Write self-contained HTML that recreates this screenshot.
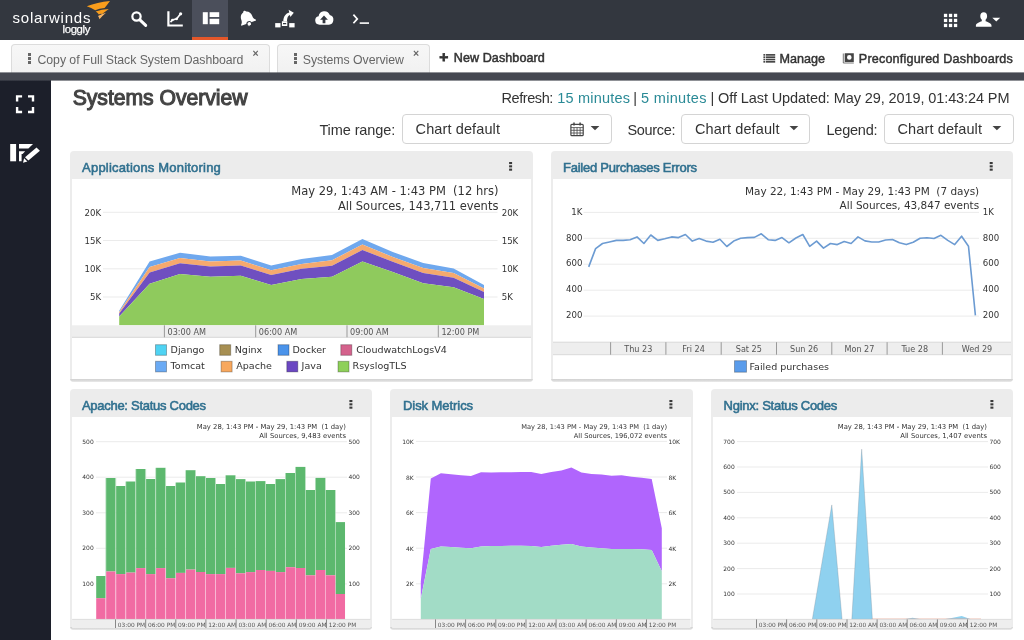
<!DOCTYPE html>
<html lang="en"><head><meta charset="utf-8"><title>Systems Overview - Loggly</title>
<style>
*{box-sizing:border-box}
html,body{margin:0;padding:0}
body{width:1024px;height:640px;overflow:hidden;background:#fff;font-family:"Liberation Sans",sans-serif;color:#333;position:relative}
.t{position:absolute;white-space:pre;display:block}
.abs{position:absolute}
header.top{position:absolute;left:0;top:0;width:1024px;height:40px;background:#33373f}
.navact{position:absolute;left:192px;top:0;width:36px;height:40px;background:#4b4f5b;border-bottom:3.5px solid #e4572a}
nav.tabs{position:absolute;left:0;top:40px;width:1024px;height:33px;background:#fff}
.tab{position:absolute;top:4px;height:29px;background:linear-gradient(#f7f7f7,#f1f1f1);border:1px solid #dcdcdc;border-bottom:none;border-radius:4px 4px 0 0}
.strip{position:absolute;z-index:2;left:0;top:72px;width:1024px;height:9px;background:linear-gradient(rgba(69,72,81,.6) 0,rgba(69,72,81,.6) 1px,#454851 1px,#454851 8px,rgba(69,72,81,.6) 8px)}
aside.side{position:absolute;left:0;top:80px;width:51px;height:560px;background:#1c1f2a}
.sel{position:absolute;height:30px;top:114px;border:1px solid #d4d4d4;border-radius:4px;background:#fff}
.panel{position:absolute;background:#ececec;border-radius:4px;overflow:hidden}
.panel .bd{position:absolute;left:2px;right:2px;bottom:3px;background:#fff}
.panel .bt{position:absolute;left:0;right:0;bottom:0;height:3px;background:linear-gradient(#d2d2d2,#dcdcdc 60%,#ececec)}
.panel svg{position:absolute;left:0;top:0}
svg text{font-family:"DejaVu Sans",sans-serif;white-space:pre}
</style></head>
<body><div id="app" style="position:absolute;left:0;top:0;width:1024px;height:640px;will-change:transform">
<header class="top">
<div class="navact"></div>
<span class="t" style="left:12.6px;top:9.5px;font-size:15px;line-height:15px;letter-spacing:0.769px;color:#fff;">solarwinds</span>
<span class="t" style="left:62.6px;top:24.05px;font-size:11.4px;line-height:11.4px;letter-spacing:-0.393px;color:#fff;-webkit-text-stroke:0.25px #fff;">loggly</span>
<svg class="abs" style="left:0;top:0" width="1024" height="40" viewBox="0 0 1024 40">
<g fill="#f99d1c">
<path d="M86.8 6.3Q97 2.2 110 .9Q107.3 4.6 104.6 7.9Q99.4 8.4 95.2 10.3Q91.3 7.6 86.8 6.3Z"/>
<path d="M95.7 11.6Q101.5 9.4 108.8 9Q105 11.8 102.2 14Q100.3 13.6 98.9 14.4Q97.5 12.8 95.7 11.6Z"/>
<path fill="#f9b566" d="M98 15.9Q101.3 13.9 106 12.7Q102.2 15.8 99.5 19.3Q99 17.4 98 15.9Z"/>
</g>
<!-- search -->
<g fill="none" stroke="#fff" stroke-linecap="round"><circle cx="136.5" cy="16.5" r="4.15" stroke-width="2.2"/><path d="M139.9 19.9l5.8 5.5" stroke-width="3"/></g>
<!-- chart -->
<g fill="none" stroke="#fff"><path d="M168.4 11.3v14.2h14.4" stroke-width="2.2"/><path d="M170.5 22.1l1.9-2.1 4.3-1.2 3.9-5" stroke-width="1.6"/></g>
<g fill="#fff"><circle cx="172.4" cy="20" r="1.3"/><circle cx="176.7" cy="18.8" r="1.35"/><circle cx="180.6" cy="13.8" r="1.6"/></g>
<!-- dashboard -->
<g fill="#fff"><rect x="202.8" y="12.2" width="5" height="12"/><rect x="209.6" y="12.2" width="9.6" height="4.8"/><rect x="209.6" y="18.8" width="9.6" height="5.4"/></g>
<!-- bell -->
<g transform="rotate(-20 247 18.5)"><path fill="#fff" d="M247 10.3c.8 0 1.4.5 1.5 1.3 2.8.8 4.3 3.1 4.3 6.1 0 2.2.6 3.6 2 4.8v1h-15.6v-1c1.4-1.2 2-2.6 2-4.8 0-3 1.5-5.3 4.3-6.1.1-.8.7-1.3 1.5-1.3z"/><circle cx="247.3" cy="24.3" r="2.3" fill="#fff" stroke="#33373f" stroke-width="1.1"/></g>
<!-- share -->
<g fill="#fff"><rect x="275.2" y="23.1" width="5.3" height="4.3"/><rect x="289.2" y="23.1" width="5.4" height="4.3"/><path d="M281.9 21.3h5.4v4.6h-5.4zM283 22.9v1.4h3.2v-1.4z" fill-rule="evenodd"/><path d="M283.3 21.2C283.5 16.5 285.7 13.4 289.3 12.5L288.6 9.7 293.8 12.7 290.4 16.9 289.9 14.9C288 15.6 287 17.6 287 21.2Z"/></g>
<!-- cloud -->
<path fill="#fff" fill-rule="evenodd" d="M319.5 24.7a4.3 4.3 0 0 1-.9-8.5 5.8 5.8 0 0 1 11.2-1.1 4.9 4.9 0 0 1-.9 9.6zM324 15.4l-3.9 4.3h2.5v3.6h2.8v-3.6h2.5z"/>
<!-- terminal -->
<g fill="none" stroke="#fff"><path d="M353.4 14.6l3.9 4.3-3.9 4.3" stroke-width="1.7"/><path d="M359.7 23.1h9.3" stroke-width="1.6"/></g>
<!-- grid -->
<g fill="#fff">
<rect x="943.9" y="13.8" width="3.3" height="3.3"/>
<rect x="948.9" y="13.8" width="3.3" height="3.3"/>
<rect x="953.9" y="13.8" width="3.3" height="3.3"/>
<rect x="943.9" y="18.8" width="3.3" height="3.3"/>
<rect x="948.9" y="18.8" width="3.3" height="3.3"/>
<rect x="953.9" y="18.8" width="3.3" height="3.3"/>
<rect x="943.9" y="23.8" width="3.3" height="3.3"/>
<rect x="948.9" y="23.8" width="3.3" height="3.3"/>
<rect x="953.9" y="23.8" width="3.3" height="3.3"/>
</g>
<!-- user -->
<path fill="#fff" d="M983.7 12.3c2.2 0 3.4 1.5 3.4 3.7 0 1.7-.6 3-1.5 3.8v1.5c2.5.9 5.9 2 5.9 4.3v1.2h-15.6v-1.2c0-2.3 3.4-3.4 5.9-4.3v-1.5c-.9-.8-1.5-2.1-1.5-3.8 0-2.2 1.2-3.7 3.4-3.7z"/>
<path fill="#fff" d="M992.3 17.8h7.9l-3.95 3.7z"/>
</svg>
</header>
<nav class="tabs">
<div class="tab" style="left:11px;width:259px"></div>
<div class="tab" style="left:277px;width:152.5px"></div>
<i class="abs" style="left:27.6px;top:13px;width:3px;height:3px;background:#666"></i><i class="abs" style="left:27.6px;top:17.2px;width:3px;height:3px;background:#666"></i><i class="abs" style="left:27.6px;top:21.4px;width:3px;height:3px;background:#666"></i>
<span class="t" style="left:37.5px;top:13.79px;font-size:12.3px;line-height:12.3px;letter-spacing:-0.055px;color:#666;">Copy of Full Stack System Dashboard</span>
<span class="t" style="left:252.6px;top:8.31px;font-size:10.5px;line-height:10.5px;font-weight:700;letter-spacing:-0.141px;color:#666;">×</span>
<i class="abs" style="left:293.6px;top:13px;width:3px;height:3px;background:#666"></i><i class="abs" style="left:293.6px;top:17.2px;width:3px;height:3px;background:#666"></i><i class="abs" style="left:293.6px;top:21.4px;width:3px;height:3px;background:#666"></i>
<span class="t" style="left:302.8px;top:13.79px;font-size:12.3px;line-height:12.3px;letter-spacing:-0.041px;color:#666;">Systems Overview</span>
<span class="t" style="left:413px;top:8.31px;font-size:10.5px;line-height:10.5px;font-weight:700;letter-spacing:-0.141px;color:#666;">×</span>
<span class="t" style="left:439.3px;top:9.48px;font-size:15.5px;line-height:15.5px;font-weight:700;letter-spacing:0.337px;color:#333;-webkit-text-stroke:0.8px #333;">+</span>
<span class="t" style="left:453.8px;top:12.23px;font-size:12.6px;line-height:12.6px;letter-spacing:0.057px;color:#333;-webkit-text-stroke:0.5px #333;">New Dashboard</span>
<svg class="abs" style="left:760px;top:10px" width="100" height="20" viewBox="760 50 100 20"><g fill="#444">
<rect x="763.4" y="54.05" width="1.6" height="1.65"/><rect x="765.7" y="54.05" width="9.5" height="1.65"/>
<rect x="763.4" y="56.37" width="1.6" height="1.65"/><rect x="765.7" y="56.37" width="9.5" height="1.65"/>
<rect x="763.4" y="58.69" width="1.6" height="1.65"/><rect x="765.7" y="58.69" width="9.5" height="1.65"/>
<rect x="763.4" y="61.01" width="1.6" height="1.65"/><rect x="765.7" y="61.01" width="9.5" height="1.65"/>
</g><path fill="#444" fill-rule="evenodd" d="M844.7 53.3h9.1v8.8h-9.1zM849.3 55.1a2.3 2.3 0 1 0 0 4.6a2.3 2.3 0 1 0 0-4.6z"/><path d="M843.3 53.5v9.5h10.5" fill="none" stroke="#555" stroke-width=".8"/></svg>
<span class="t" style="left:779.5px;top:13.13px;font-size:12.6px;line-height:12.6px;color:#333;-webkit-text-stroke:0.45px #333;">Manage</span>
<span class="t" style="left:858.8px;top:13.13px;font-size:12.6px;line-height:12.6px;letter-spacing:0.181px;color:#333;-webkit-text-stroke:0.45px #333;">Preconfigured Dashboards</span>
</nav>
<div class="strip"></div>
<aside class="side">
<svg class="abs" style="left:0;top:0" width="51" height="100" viewBox="0 80 51 100">
<g fill="none" stroke="#fff" stroke-width="2.4"><path d="M17.1 101.4v-5h5"/><path d="M28 96.4h5v5"/><path d="M33 107v5h-5"/><path d="M22.1 112h-5v-5"/></g>
<g fill="#fff"><rect x="10.2" y="144" width="5.9" height="17.3"/>
<path d="M19 144h14l-4.6 4.6h-9.4z"/><path d="M19 151.3h6.2l-2.6 2.6h-1v7.4h-2.6z"/>
<g stroke="#1c1f2a" stroke-width="1.3" paint-order="stroke"><path d="M36.5 147.4l3.4 3.3-11.5 9.8-3.4-3.3z"/><path d="M24.1 158.3l3.3 3.2-4.4 1.2z"/></g></g>
</svg>
</aside>
<main>
<span class="t" style="left:72.7px;top:87.05px;font-size:21.2px;line-height:21.2px;letter-spacing:-0.041px;color:#444;-webkit-text-stroke:1.1px #444;">Systems Overview</span>
<span class="t" style="left:501.6px;top:91.13px;font-size:14.5px;line-height:14.5px;letter-spacing:-0.445px;color:#333;">Refresh:</span>
<span class="t" style="left:557.2px;top:91.13px;font-size:14.5px;line-height:14.5px;letter-spacing:0.207px;color:#2a8a96;">15 minutes</span>
<span class="t" style="left:633.3px;top:91.13px;font-size:14.5px;line-height:14.5px;color:#333;">|</span>
<span class="t" style="left:641px;top:91.13px;font-size:14.5px;line-height:14.5px;letter-spacing:0.328px;color:#2a8a96;">5 minutes</span>
<span class="t" style="left:710.5px;top:91.13px;font-size:14.5px;line-height:14.5px;letter-spacing:-0.099px;color:#333;">| Off Last Updated: May 29, 2019, 01:43:24 PM</span>
<span class="t" style="left:319.4px;top:123.33px;font-size:14.5px;line-height:14.5px;letter-spacing:-0.093px;color:#333;">Time range:</span>
<div class="sel" style="left:402px;width:210px"></div>
<span class="t" style="left:415.6px;top:122.43px;font-size:14.5px;line-height:14.5px;letter-spacing:0.114px;color:#333;">Chart default</span>
<span class="t" style="left:627.5px;top:123.33px;font-size:14.5px;line-height:14.5px;letter-spacing:-0.331px;color:#333;">Source:</span>
<div class="sel" style="left:681px;width:129px"></div>
<span class="t" style="left:695px;top:122.43px;font-size:14.5px;line-height:14.5px;letter-spacing:0.122px;color:#333;">Chart default</span>
<span class="t" style="left:826.5px;top:123.33px;font-size:14.5px;line-height:14.5px;letter-spacing:-0.237px;color:#333;">Legend:</span>
<div class="sel" style="left:884px;width:130px"></div>
<span class="t" style="left:897.5px;top:122.43px;font-size:14.5px;line-height:14.5px;letter-spacing:0.122px;color:#333;">Chart default</span>
<svg class="abs" style="left:560px;top:114px" width="460" height="30" viewBox="560 114 460 30">
<g fill="#444"><path d="M590.6 126h8.8l-4.4 4.3z"/><path d="M789.5 126h8.8l-4.4 4.3z"/><path d="M992.5 126h8.8l-4.4 4.3z"/></g>
<g fill="none" stroke="#444"><rect x="570.9" y="124.3" width="12.3" height="11.4" rx="1" stroke-width="1.2"/><path d="M570.9 127.6h12.3M574 127.6v8M577.05 127.6v8M580.1 127.6v8M570.9 130.3h12.3M570.9 133h12.3" stroke-width=".8"/><path d="M574 122.4v3M580.1 122.4v3" stroke-width="1.5"/></g>
</svg>
<section class="panel" style="left:70px;top:151px;width:463px;height:231px"><div class="bd" style="top:27.7px"></div><div class="bt"></div><span class="t" style="left:12.1px;top:9.9px;font-size:13px;line-height:13px;letter-spacing:0.195px;color:#30708f;-webkit-text-stroke:0.55px #30708f;">Applications Monitoring</span><svg width="463" height="231" viewBox="70 151 463 231"><rect x="509.1" y="162" width="3" height="2.1" fill="#3a3a3a"/><rect x="509.1" y="165.3" width="3" height="2.1" fill="#3a3a3a"/><rect x="509.1" y="168.6" width="3" height="2.1" fill="#3a3a3a"/>
<path d="M103 212.3H497.5" stroke="#ebebeb" stroke-width="1"/>
<path d="M103 240.5H497.5" stroke="#ebebeb" stroke-width="1"/>
<path d="M103 268.8H497.5" stroke="#ebebeb" stroke-width="1"/>
<path d="M103 297H497.5" stroke="#ebebeb" stroke-width="1"/>
<polygon points="119.2,310.7 149.6,261.5 180,252.8 210.4,256.4 240.8,255.7 271.2,265.5 301.6,259 332,255 362.4,239 392.8,252 423.2,263 453.6,268.5 484,285 484,288.4 453.6,273.1 423.2,268 392.8,256.9 362.4,244.5 332,260.3 301.6,263.9 271.2,270.3 240.8,260.6 210.4,261.4 180,258 149.6,267 119.2,312.1" fill="#6fa8ee"/>
<polygon points="119.2,312.1 149.6,267 180,258 210.4,261.4 240.8,260.6 271.2,270.3 301.6,263.9 332,260.3 362.4,244.5 392.8,256.9 423.2,268 453.6,273.1 484,288.4 484,291.9 453.6,277.7 423.2,272.9 392.8,261.8 362.4,250 332,265.7 301.6,268.8 271.2,275.1 240.8,265.5 210.4,266.4 180,263.2 149.6,272.4 119.2,313.6" fill="#f5a96e"/>
<polygon points="119.2,313.6 149.6,272.4 180,263.2 210.4,266.4 240.8,265.5 271.2,275.1 301.6,268.8 332,265.7 362.4,250 392.8,261.8 423.2,272.9 453.6,277.7 484,291.9 484,299 453.6,287.3 423.2,283.3 392.8,272 362.4,261.5 332,276.8 301.6,279 271.2,285 240.8,275.8 210.4,276.8 180,274 149.6,283.8 119.2,316.6" fill="#6f4fc0"/>
<polygon points="119.2,316.6 149.6,283.8 180,274 210.4,276.8 240.8,275.8 271.2,285 301.6,279 332,276.8 362.4,261.5 392.8,272 423.2,283.3 453.6,287.3 484,299 484,325.3 119.2,325.3" fill="#8fca5d"/>
<rect x="72" y="325.3" width="459" height="12" fill="#eeeeee"/><path d="M72 337.3H531" stroke="#d8d8d8" stroke-width="1"/>
<path d="M164.4 325.3V337.3" stroke="#999" stroke-width="1"/>
<text x="167.5" y="334.6" font-size="8.15" fill="#555">03:00 AM</text>
<path d="M255.7 325.3V337.3" stroke="#999" stroke-width="1"/>
<text x="258.8" y="334.6" font-size="8.15" fill="#555">06:00 AM</text>
<path d="M347 325.3V337.3" stroke="#999" stroke-width="1"/>
<text x="350.1" y="334.6" font-size="8.15" fill="#555">09:00 AM</text>
<path d="M438.3 325.3V337.3" stroke="#999" stroke-width="1"/>
<text x="441.4" y="334.6" font-size="8.15" fill="#555">12:00 PM</text>
<text x="101.2" y="215.5" font-size="8.6" text-anchor="end" fill="#333">20K</text>
<text x="501.7" y="215.5" font-size="8.6" fill="#333">20K</text>
<text x="101.2" y="243.7" font-size="8.6" text-anchor="end" fill="#333">15K</text>
<text x="501.7" y="243.7" font-size="8.6" fill="#333">15K</text>
<text x="101.2" y="272" font-size="8.6" text-anchor="end" fill="#333">10K</text>
<text x="501.7" y="272" font-size="8.6" fill="#333">10K</text>
<text x="101.2" y="300.2" font-size="8.6" text-anchor="end" fill="#333">5K</text>
<text x="501.7" y="300.2" font-size="8.6" fill="#333">5K</text>
<text x="498.4" y="195.2" font-size="11.5" text-anchor="end" fill="#333">May 29, 1:43 AM - 1:43 PM  (12 hrs)</text>
<text x="498.4" y="209.7" font-size="11.49" text-anchor="end" fill="#333">All Sources, 143,711 events</text>
<rect x="155.5" y="344.7" width="11" height="10.6" fill="#4fd3f3" stroke="rgba(0,0,0,.28)" stroke-width="1"/>
<text x="170.6" y="352.8" font-size="9.55" fill="#333">Django</text>
<rect x="219.7" y="344.7" width="11" height="10.6" fill="#a78f52" stroke="rgba(0,0,0,.28)" stroke-width="1"/>
<text x="234.7" y="352.8" font-size="9.55" fill="#333">Nginx</text>
<rect x="278" y="344.7" width="11" height="10.6" fill="#4a93ea" stroke="rgba(0,0,0,.28)" stroke-width="1"/>
<text x="292.5" y="352.8" font-size="9.55" fill="#333">Docker</text>
<rect x="340.8" y="344.7" width="11" height="10.6" fill="#d4628c" stroke="rgba(0,0,0,.28)" stroke-width="1"/>
<text x="356.25" y="352.8" font-size="9.55" fill="#333">CloudwatchLogsV4</text>
<rect x="155.5" y="361.3" width="11" height="10.6" fill="#6aaaf4" stroke="rgba(0,0,0,.28)" stroke-width="1"/>
<text x="170.6" y="369.4" font-size="9.55" fill="#333">Tomcat</text>
<rect x="221.1" y="361.3" width="11" height="10.6" fill="#f8a85e" stroke="rgba(0,0,0,.28)" stroke-width="1"/>
<text x="236.25" y="369.4" font-size="9.55" fill="#333">Apache</text>
<rect x="286.8" y="361.3" width="11" height="10.6" fill="#6b47c2" stroke="rgba(0,0,0,.28)" stroke-width="1"/>
<text x="301.6" y="369.4" font-size="9.55" fill="#333">Java</text>
<rect x="338" y="361.3" width="11" height="10.6" fill="#8ed05a" stroke="rgba(0,0,0,.28)" stroke-width="1"/>
<text x="352.5" y="369.4" font-size="9.55" fill="#333">RsyslogTLS</text>
</svg></section>
<section class="panel" style="left:551px;top:151px;width:462px;height:231px"><div class="bd" style="top:27.7px"></div><div class="bt"></div><span class="t" style="left:12px;top:9.9px;font-size:13px;line-height:13px;letter-spacing:-0.248px;color:#30708f;-webkit-text-stroke:0.55px #30708f;">Failed Purchases Errors</span><svg width="462" height="231" viewBox="551 151 462 231"><rect x="989.7" y="162" width="3" height="2.1" fill="#3a3a3a"/><rect x="989.7" y="165.3" width="3" height="2.1" fill="#3a3a3a"/><rect x="989.7" y="168.6" width="3" height="2.1" fill="#3a3a3a"/>
<path d="M583.5 212.4H979" stroke="#ebebeb" stroke-width="1"/>
<path d="M583.5 238.3H979" stroke="#ebebeb" stroke-width="1"/>
<path d="M583.5 264.2H979" stroke="#ebebeb" stroke-width="1"/>
<path d="M583.5 290.2H979" stroke="#ebebeb" stroke-width="1"/>
<path d="M583.5 316.1H979" stroke="#ebebeb" stroke-width="1"/>
<polyline points="588.7,266.9 595.6,248.6 602.5,243.5 609.4,242 616.3,240.4 623.2,240.4 630.1,239.7 637,236.9 643.9,243.5 650.8,235 657.8,240.4 664.7,238.8 671.6,236.9 678.5,237.6 685.4,234.5 692.3,241.1 699.2,238.5 706.1,241.1 713,242.3 719.9,239.2 726.8,246.5 733.7,241.1 740.6,238.3 747.5,237.6 754.4,237.4 761.3,233.8 768.2,239.7 775.1,240.4 782,237.6 788.9,242.8 795.9,238 802.8,234.5 809.7,246.3 816.6,241.1 823.5,248.1 830.4,243.5 837.3,244.6 844.2,241.6 851.1,243.5 858,236.9 864.9,240.9 871.8,242 878.7,242 885.6,240 892.5,239.5 899.4,242.8 906.3,244.6 913.2,242.3 920.1,238.3 927,237.8 934,238.5 940.9,235.3 947.8,240.4 954.7,244.6 961.6,236.2 968.5,246.3 975.4,315.4" fill="none" stroke="#6c9bd2" stroke-width="1.6" stroke-linejoin="round"/>
<rect x="553" y="342.2" width="458" height="12.3" fill="#eeeeee"/><path d="M553 342.2H1011M553 354.7H1011" stroke="#d8d8d8" stroke-width="1"/>
<path d="M610.6 342.2V354.7" stroke="#999" stroke-width="1"/>
<text x="638.25" y="351.6" font-size="8.1" text-anchor="middle" fill="#555">Thu 23</text>
<path d="M665.9 342.2V354.7" stroke="#999" stroke-width="1"/>
<text x="693.55" y="351.6" font-size="8.1" text-anchor="middle" fill="#555">Fri 24</text>
<path d="M721.2 342.2V354.7" stroke="#999" stroke-width="1"/>
<text x="748.85" y="351.6" font-size="8.1" text-anchor="middle" fill="#555">Sat 25</text>
<path d="M776.5 342.2V354.7" stroke="#999" stroke-width="1"/>
<text x="804.15" y="351.6" font-size="8.1" text-anchor="middle" fill="#555">Sun 26</text>
<path d="M831.8 342.2V354.7" stroke="#999" stroke-width="1"/>
<text x="859.45" y="351.6" font-size="8.1" text-anchor="middle" fill="#555">Mon 27</text>
<path d="M887.1 342.2V354.7" stroke="#999" stroke-width="1"/>
<text x="914.75" y="351.6" font-size="8.1" text-anchor="middle" fill="#555">Tue 28</text>
<path d="M942.4 342.2V354.7" stroke="#999" stroke-width="1"/>
<text x="977" y="351.6" font-size="8.1" text-anchor="middle" fill="#555">Wed 29</text>
<text x="582.4" y="214.6" font-size="8.6" text-anchor="end" fill="#333">1K</text>
<text x="982.8" y="214.6" font-size="8.6" fill="#333">1K</text>
<text x="582.4" y="240.5" font-size="8.6" text-anchor="end" fill="#333">800</text>
<text x="982.8" y="240.5" font-size="8.6" fill="#333">800</text>
<text x="582.4" y="266.4" font-size="8.6" text-anchor="end" fill="#333">600</text>
<text x="982.8" y="266.4" font-size="8.6" fill="#333">600</text>
<text x="582.4" y="292.4" font-size="8.6" text-anchor="end" fill="#333">400</text>
<text x="982.8" y="292.4" font-size="8.6" fill="#333">400</text>
<text x="582.4" y="318.3" font-size="8.6" text-anchor="end" fill="#333">200</text>
<text x="982.8" y="318.3" font-size="8.6" fill="#333">200</text>
<text x="979.2" y="194.7" font-size="10.48" text-anchor="end" fill="#333">May 22, 1:43 PM - May 29, 1:43 PM  (7 days)</text>
<text x="979.2" y="208.6" font-size="10.47" text-anchor="end" fill="#333">All Sources, 43,847 events</text>
<rect x="734.5" y="360.7" width="12" height="11.5" fill="#5a9ceb" stroke="rgba(0,0,0,.28)" stroke-width="1"/>
<text x="749.5" y="369.6" font-size="9.55" fill="#333">Failed purchases</text>
</svg></section>
<section class="panel" style="left:70px;top:389px;width:302px;height:241px"><div class="bd" style="top:27.6px"></div><div class="bt"></div><span class="t" style="left:11.9px;top:9.7px;font-size:13px;line-height:13px;letter-spacing:-0.272px;color:#30708f;-webkit-text-stroke:0.55px #30708f;">Apache: Status Codes</span><svg width="302" height="241" viewBox="70 389 302 241"><rect x="349.4" y="400" width="3" height="2.1" fill="#3a3a3a"/><rect x="349.4" y="403.3" width="3" height="2.1" fill="#3a3a3a"/><rect x="349.4" y="406.6" width="3" height="2.1" fill="#3a3a3a"/>
<path d="M96 441.7H347" stroke="#ebebeb" stroke-width="1"/><path d="M96 477.2H347" stroke="#ebebeb" stroke-width="1"/><path d="M96 512.8H347" stroke="#ebebeb" stroke-width="1"/><path d="M96 548.3H347" stroke="#ebebeb" stroke-width="1"/><path d="M96 583.9H347" stroke="#ebebeb" stroke-width="1"/>
<rect x="96.2" y="576" width="9.3" height="22.2" fill="#5cb86e"/><rect x="96.2" y="598.2" width="9.3" height="21.2" fill="#f16ba3"/>
<rect x="105.5" y="478" width=".680" height="120.2" fill="#a9d9b3"/><rect x="105.5" y="598.2" width=".680" height="21.2" fill="#f7b0cd"/>
<rect x="106.18" y="478" width="9.3" height="93.5" fill="#5cb86e"/><rect x="106.18" y="571.5" width="9.3" height="47.9" fill="#f16ba3"/>
<rect x="115.48" y="478" width=".680" height="93.5" fill="#a9d9b3"/><rect x="115.48" y="571.5" width=".680" height="47.9" fill="#f7b0cd"/>
<rect x="116.16" y="486" width="9.3" height="88.1" fill="#5cb86e"/><rect x="116.16" y="574.1" width="9.3" height="45.3" fill="#f16ba3"/>
<rect x="125.46" y="481.5" width=".680" height="92.6" fill="#a9d9b3"/><rect x="125.46" y="574.1" width=".680" height="45.3" fill="#f7b0cd"/>
<rect x="126.14" y="481.5" width="9.3" height="91.1" fill="#5cb86e"/><rect x="126.14" y="572.6" width="9.3" height="46.8" fill="#f16ba3"/>
<rect x="135.44" y="469" width=".680" height="103.6" fill="#a9d9b3"/><rect x="135.44" y="572.6" width=".680" height="46.8" fill="#f7b0cd"/>
<rect x="136.12" y="469" width="9.3" height="99.1" fill="#5cb86e"/><rect x="136.12" y="568.1" width="9.3" height="51.3" fill="#f16ba3"/>
<rect x="145.42" y="469" width=".680" height="99.1" fill="#a9d9b3"/><rect x="145.42" y="568.1" width=".680" height="51.3" fill="#f7b0cd"/>
<rect x="146.1" y="479" width="9.3" height="95.1" fill="#5cb86e"/><rect x="146.1" y="574.1" width="9.3" height="45.3" fill="#f16ba3"/>
<rect x="155.4" y="467.8" width=".680" height="106.3" fill="#a9d9b3"/><rect x="155.4" y="574.1" width=".680" height="45.3" fill="#f7b0cd"/>
<rect x="156.08" y="467.8" width="9.3" height="100.3" fill="#5cb86e"/><rect x="156.08" y="568.1" width="9.3" height="51.3" fill="#f16ba3"/>
<rect x="165.38" y="467.8" width=".680" height="100.3" fill="#a9d9b3"/><rect x="165.38" y="568.1" width=".680" height="51.3" fill="#f7b0cd"/>
<rect x="166.06" y="486" width="9.3" height="92.2" fill="#5cb86e"/><rect x="166.06" y="578.2" width="9.3" height="41.2" fill="#f16ba3"/>
<rect x="175.36" y="482.5" width=".680" height="95.7" fill="#a9d9b3"/><rect x="175.36" y="578.2" width=".680" height="41.2" fill="#f7b0cd"/>
<rect x="176.04" y="482.5" width="9.3" height="90.4" fill="#5cb86e"/><rect x="176.04" y="572.9" width="9.3" height="46.5" fill="#f16ba3"/>
<rect x="185.34" y="470.2" width=".680" height="102.7" fill="#a9d9b3"/><rect x="185.34" y="572.9" width=".680" height="46.5" fill="#f7b0cd"/>
<rect x="186.02" y="470.2" width="9.3" height="99.4" fill="#5cb86e"/><rect x="186.02" y="569.6" width="9.3" height="49.8" fill="#f16ba3"/>
<rect x="195.32" y="470.2" width=".680" height="99.4" fill="#a9d9b3"/><rect x="195.32" y="569.6" width=".680" height="49.8" fill="#f7b0cd"/>
<rect x="196" y="476.2" width="9.3" height="95.8" fill="#5cb86e"/><rect x="196" y="572" width="9.3" height="47.4" fill="#f16ba3"/>
<rect x="205.3" y="476.2" width=".680" height="95.8" fill="#a9d9b3"/><rect x="205.3" y="572" width=".680" height="47.4" fill="#f7b0cd"/>
<rect x="205.98" y="478" width="9.3" height="96.1" fill="#5cb86e"/><rect x="205.98" y="574.1" width="9.3" height="45.3" fill="#f16ba3"/>
<rect x="215.28" y="478" width=".680" height="96.1" fill="#a9d9b3"/><rect x="215.28" y="574.1" width=".680" height="45.3" fill="#f7b0cd"/>
<rect x="215.96" y="484" width="9.3" height="90.1" fill="#5cb86e"/><rect x="215.96" y="574.1" width="9.3" height="45.3" fill="#f16ba3"/>
<rect x="225.26" y="475.3" width=".680" height="98.8" fill="#a9d9b3"/><rect x="225.26" y="574.1" width=".680" height="45.3" fill="#f7b0cd"/>
<rect x="225.94" y="475.3" width="9.3" height="92.6" fill="#5cb86e"/><rect x="225.94" y="567.9" width="9.3" height="51.5" fill="#f16ba3"/>
<rect x="235.24" y="475.3" width=".680" height="92.6" fill="#a9d9b3"/><rect x="235.24" y="567.9" width=".680" height="51.5" fill="#f7b0cd"/>
<rect x="235.92" y="479.1" width="9.3" height="94.2" fill="#5cb86e"/><rect x="235.92" y="573.3" width="9.3" height="46.1" fill="#f16ba3"/>
<rect x="245.22" y="479.1" width=".680" height="94.2" fill="#a9d9b3"/><rect x="245.22" y="573.3" width=".680" height="46.1" fill="#f7b0cd"/>
<rect x="245.9" y="481.5" width="9.3" height="90.6" fill="#5cb86e"/><rect x="245.9" y="572.1" width="9.3" height="47.3" fill="#f16ba3"/>
<rect x="255.2" y="481.1" width=".680" height="91" fill="#a9d9b3"/><rect x="255.2" y="572.1" width=".680" height="47.3" fill="#f7b0cd"/>
<rect x="255.88" y="481.1" width="9.3" height="88.9" fill="#5cb86e"/><rect x="255.88" y="570" width="9.3" height="49.4" fill="#f16ba3"/>
<rect x="265.18" y="481.1" width=".680" height="88.9" fill="#a9d9b3"/><rect x="265.18" y="570" width=".680" height="49.4" fill="#f7b0cd"/>
<rect x="265.86" y="484" width="9.3" height="86.9" fill="#5cb86e"/><rect x="265.86" y="570.9" width="9.3" height="48.5" fill="#f16ba3"/>
<rect x="275.16" y="479.1" width=".680" height="91.8" fill="#a9d9b3"/><rect x="275.16" y="570.9" width=".680" height="48.5" fill="#f7b0cd"/>
<rect x="275.84" y="479.1" width="9.3" height="93" fill="#5cb86e"/><rect x="275.84" y="572.1" width="9.3" height="47.3" fill="#f16ba3"/>
<rect x="285.14" y="473" width=".680" height="99.1" fill="#a9d9b3"/><rect x="285.14" y="572.1" width=".680" height="47.3" fill="#f7b0cd"/>
<rect x="285.82" y="473" width="9.3" height="94.2" fill="#5cb86e"/><rect x="285.82" y="567.2" width="9.3" height="52.2" fill="#f16ba3"/>
<rect x="295.12" y="466.9" width=".680" height="100.3" fill="#a9d9b3"/><rect x="295.12" y="567.2" width=".680" height="52.2" fill="#f7b0cd"/>
<rect x="295.8" y="466.9" width="9.3" height="101.1" fill="#5cb86e"/><rect x="295.8" y="568" width="9.3" height="51.4" fill="#f16ba3"/>
<rect x="305.1" y="466.9" width=".680" height="101.1" fill="#a9d9b3"/><rect x="305.1" y="568" width=".680" height="51.4" fill="#f7b0cd"/>
<rect x="305.78" y="490" width="9.3" height="85.3" fill="#5cb86e"/><rect x="305.78" y="575.3" width="9.3" height="44.1" fill="#f16ba3"/>
<rect x="315.08" y="477.9" width=".680" height="97.4" fill="#a9d9b3"/><rect x="315.08" y="575.3" width=".680" height="44.1" fill="#f7b0cd"/>
<rect x="315.76" y="477.9" width="9.3" height="92.1" fill="#5cb86e"/><rect x="315.76" y="570" width="9.3" height="49.4" fill="#f16ba3"/>
<rect x="325.06" y="477.9" width=".680" height="92.1" fill="#a9d9b3"/><rect x="325.06" y="570" width=".680" height="49.4" fill="#f7b0cd"/>
<rect x="325.74" y="490" width="9.3" height="85.3" fill="#5cb86e"/><rect x="325.74" y="575.3" width="9.3" height="44.1" fill="#f16ba3"/>
<rect x="335.04" y="490" width=".680" height="85.3" fill="#a9d9b3"/><rect x="335.04" y="575.3" width=".680" height="44.1" fill="#f7b0cd"/>
<rect x="335.72" y="522.1" width="9.3" height="71.9" fill="#5cb86e"/><rect x="335.72" y="594" width="9.3" height="25.4" fill="#f16ba3"/>

<rect x="72.1" y="619.4" width="298.4" height="8.6" fill="#eeeeee"/><path d="M72.1 619.4h298.4" stroke="#d8d8d8" stroke-width=".8"/><path d="M115.5 619.4V628" stroke="#888" stroke-width="1"/><text x="117.8" y="626.7" font-size="5.87" fill="#555">03:00 PM</text><path d="M145.7 619.4V628" stroke="#888" stroke-width="1"/><text x="147.95" y="626.7" font-size="5.87" fill="#555">06:00 PM</text><path d="M175.8 619.4V628" stroke="#888" stroke-width="1"/><text x="178.1" y="626.7" font-size="5.87" fill="#555">09:00 PM</text><path d="M205.9 619.4V628" stroke="#888" stroke-width="1"/><text x="208.25" y="626.7" font-size="5.87" fill="#555">12:00 AM</text><path d="M236.1 619.4V628" stroke="#888" stroke-width="1"/><text x="238.4" y="626.7" font-size="5.87" fill="#555">03:00 AM</text><path d="M266.2 619.4V628" stroke="#888" stroke-width="1"/><text x="268.55" y="626.7" font-size="5.87" fill="#555">06:00 AM</text><path d="M296.4 619.4V628" stroke="#888" stroke-width="1"/><text x="298.7" y="626.7" font-size="5.87" fill="#555">09:00 AM</text><path d="M326.5 619.4V628" stroke="#888" stroke-width="1"/><text x="328.85" y="626.7" font-size="5.87" fill="#555">12:00 PM</text><text x="93.7" y="443.6" font-size="5.97" text-anchor="end" fill="#333">500</text><text x="348.4" y="443.6" font-size="5.97" fill="#333">500</text><text x="93.7" y="479.1" font-size="5.97" text-anchor="end" fill="#333">400</text><text x="348.4" y="479.1" font-size="5.97" fill="#333">400</text><text x="93.7" y="514.7" font-size="5.97" text-anchor="end" fill="#333">300</text><text x="348.4" y="514.7" font-size="5.97" fill="#333">300</text><text x="93.7" y="550.2" font-size="5.97" text-anchor="end" fill="#333">200</text><text x="348.4" y="550.2" font-size="5.97" fill="#333">200</text><text x="93.7" y="585.8" font-size="5.97" text-anchor="end" fill="#333">100</text><text x="348.4" y="585.8" font-size="5.97" fill="#333">100</text><text x="346" y="428.7" font-size="6.84" text-anchor="end" fill="#333">May 28, 1:43 PM - May 29, 1:43 PM  (1 day)</text><text x="346" y="437.5" font-size="6.84" text-anchor="end" fill="#333">All Sources, 9,483 events</text>
</svg></section>
<section class="panel" style="left:390px;top:389px;width:303px;height:241px"><div class="bd" style="top:27.6px"></div><div class="bt"></div><span class="t" style="left:13px;top:9.7px;font-size:13px;line-height:13px;letter-spacing:-0.062px;color:#30708f;-webkit-text-stroke:0.55px #30708f;">Disk Metrics</span><svg width="303" height="241" viewBox="390 389 303 241"><rect x="669.4" y="400" width="3" height="2.1" fill="#3a3a3a"/><rect x="669.4" y="403.3" width="3" height="2.1" fill="#3a3a3a"/><rect x="669.4" y="406.6" width="3" height="2.1" fill="#3a3a3a"/>
<path d="M416 441.4H667" stroke="#ebebeb" stroke-width="1"/><path d="M416 477H667" stroke="#ebebeb" stroke-width="1"/><path d="M416 512.6H667" stroke="#ebebeb" stroke-width="1"/><path d="M416 548.2H667" stroke="#ebebeb" stroke-width="1"/><path d="M416 583.8H667" stroke="#ebebeb" stroke-width="1"/>
<polygon points="420.8,581.5 430.8,478.4 440.9,473.3 450.9,474.3 461,475.3 471,476 481,472.2 491.1,472.6 501.1,472.2 511.2,472.2 521.2,471.9 531.2,471.9 541.3,474 551.3,471.9 561.4,470.5 571.4,467.4 581.4,472.6 591.5,474 601.5,474.6 611.6,475.7 621.6,475.3 631.6,476.7 641.7,477.7 651.7,479.1 661.8,528.2 661.8,571.2 651.7,549.9 641.7,549.2 631.6,548.9 621.6,548.9 611.6,548.9 601.5,548.2 591.5,547.5 581.4,546.5 571.4,544 561.4,544.7 551.3,545.8 541.3,547.1 531.2,546.1 521.2,545.8 511.2,545.8 501.1,546.1 491.1,546.1 481,546.5 471,548.2 461,547.8 450.9,547.1 440.9,546.5 430.8,548.9 420.8,598.7" fill="#b065fd"/>
<polygon points="420.8,598.7 430.8,548.9 440.9,546.5 450.9,547.1 461,547.8 471,548.2 481,546.5 491.1,546.1 501.1,546.1 511.2,545.8 521.2,545.8 531.2,546.1 541.3,547.1 551.3,545.8 561.4,544.7 571.4,544 581.4,546.5 591.5,547.5 601.5,548.2 611.6,548.9 621.6,548.9 631.6,548.9 641.7,549.2 651.7,549.9 661.8,571.2 661.8,619.4 420.8,619.4" fill="#a2dcc6"/>
<rect x="392.1" y="619.4" width="298.4" height="8.6" fill="#eeeeee"/><path d="M392.1 619.4h298.4" stroke="#d8d8d8" stroke-width=".8"/><path d="M435.5 619.4V628" stroke="#888" stroke-width="1"/><text x="437.8" y="626.7" font-size="5.87" fill="#555">03:00 PM</text><path d="M465.6 619.4V628" stroke="#888" stroke-width="1"/><text x="467.95" y="626.7" font-size="5.87" fill="#555">06:00 PM</text><path d="M495.8 619.4V628" stroke="#888" stroke-width="1"/><text x="498.1" y="626.7" font-size="5.87" fill="#555">09:00 PM</text><path d="M526 619.4V628" stroke="#888" stroke-width="1"/><text x="528.25" y="626.7" font-size="5.87" fill="#555">12:00 AM</text><path d="M556.1 619.4V628" stroke="#888" stroke-width="1"/><text x="558.4" y="626.7" font-size="5.87" fill="#555">03:00 AM</text><path d="M586.2 619.4V628" stroke="#888" stroke-width="1"/><text x="588.55" y="626.7" font-size="5.87" fill="#555">06:00 AM</text><path d="M616.4 619.4V628" stroke="#888" stroke-width="1"/><text x="618.7" y="626.7" font-size="5.87" fill="#555">09:00 AM</text><path d="M646.5 619.4V628" stroke="#888" stroke-width="1"/><text x="648.85" y="626.7" font-size="5.87" fill="#555">12:00 PM</text><text x="413.7" y="444" font-size="5.97" text-anchor="end" fill="#333">10K</text><text x="668.4" y="444" font-size="5.97" fill="#333">10K</text><text x="413.7" y="479.6" font-size="5.97" text-anchor="end" fill="#333">8K</text><text x="668.4" y="479.6" font-size="5.97" fill="#333">8K</text><text x="413.7" y="515.2" font-size="5.97" text-anchor="end" fill="#333">6K</text><text x="668.4" y="515.2" font-size="5.97" fill="#333">6K</text><text x="413.7" y="550.8" font-size="5.97" text-anchor="end" fill="#333">4K</text><text x="668.4" y="550.8" font-size="5.97" fill="#333">4K</text><text x="413.7" y="586.4" font-size="5.97" text-anchor="end" fill="#333">2K</text><text x="668.4" y="586.4" font-size="5.97" fill="#333">2K</text><text x="667" y="428.7" font-size="6.68" text-anchor="end" fill="#333">May 28, 1:43 PM - May 29, 1:43 PM  (1 day)</text><text x="667" y="437.5" font-size="6.68" text-anchor="end" fill="#333">All Sources, 196,072 events</text>
</svg></section>
<section class="panel" style="left:711px;top:389px;width:302px;height:241px"><div class="bd" style="top:27.6px"></div><div class="bt"></div><span class="t" style="left:12.6px;top:9.7px;font-size:13px;line-height:13px;letter-spacing:-0.268px;color:#30708f;-webkit-text-stroke:0.55px #30708f;">Nginx: Status Codes</span><svg width="302" height="241" viewBox="711 389 302 241"><rect x="990.4" y="400" width="3" height="2.1" fill="#3a3a3a"/><rect x="990.4" y="403.3" width="3" height="2.1" fill="#3a3a3a"/><rect x="990.4" y="406.6" width="3" height="2.1" fill="#3a3a3a"/>
<path d="M737 441.6H988" stroke="#ebebeb" stroke-width="1"/><path d="M737 467H988" stroke="#ebebeb" stroke-width="1"/><path d="M737 492.4H988" stroke="#ebebeb" stroke-width="1"/><path d="M737 517.8H988" stroke="#ebebeb" stroke-width="1"/><path d="M737 543.2H988" stroke="#ebebeb" stroke-width="1"/><path d="M737 568.6H988" stroke="#ebebeb" stroke-width="1"/><path d="M737 594H988" stroke="#ebebeb" stroke-width="1"/>
<polygon points="812.3,619.4 831.8,504.9 842.1,619.4" fill="#8fd1ef" stroke="rgba(110,125,140,.45)" stroke-width=".6"/>
<polygon points="851.8,619.4 861.7,449.2 872.4,619.4" fill="#8fd1ef" stroke="rgba(110,125,140,.45)" stroke-width=".6"/>
<polygon points="902.5,619.4 912.6,617.8 922.6,619.4" fill="#8fd1ef"/>
<polygon points="941.7,619.4 951.7,618 961.7,615.9 971.7,619.4" fill="#8fd1ef"/>
<path d="M872 619H981" stroke="#e9967a" stroke-width=".6"/>
<rect x="713.1" y="619.4" width="298.4" height="8.6" fill="#eeeeee"/><path d="M713.1 619.4h298.4" stroke="#d8d8d8" stroke-width=".8"/><path d="M756.5 619.4V628" stroke="#888" stroke-width="1"/><text x="758.8" y="626.7" font-size="5.87" fill="#555">03:00 PM</text><path d="M786.6 619.4V628" stroke="#888" stroke-width="1"/><text x="788.95" y="626.7" font-size="5.87" fill="#555">06:00 PM</text><path d="M816.8 619.4V628" stroke="#888" stroke-width="1"/><text x="819.1" y="626.7" font-size="5.87" fill="#555">09:00 PM</text><path d="M847 619.4V628" stroke="#888" stroke-width="1"/><text x="849.25" y="626.7" font-size="5.87" fill="#555">12:00 AM</text><path d="M877.1 619.4V628" stroke="#888" stroke-width="1"/><text x="879.4" y="626.7" font-size="5.87" fill="#555">03:00 AM</text><path d="M907.2 619.4V628" stroke="#888" stroke-width="1"/><text x="909.55" y="626.7" font-size="5.87" fill="#555">06:00 AM</text><path d="M937.4 619.4V628" stroke="#888" stroke-width="1"/><text x="939.7" y="626.7" font-size="5.87" fill="#555">09:00 AM</text><path d="M967.5 619.4V628" stroke="#888" stroke-width="1"/><text x="969.85" y="626.7" font-size="5.87" fill="#555">12:00 PM</text><text x="734.7" y="443.5" font-size="5.97" text-anchor="end" fill="#333">700</text><text x="989.4" y="443.5" font-size="5.97" fill="#333">700</text><text x="734.7" y="468.9" font-size="5.97" text-anchor="end" fill="#333">600</text><text x="989.4" y="468.9" font-size="5.97" fill="#333">600</text><text x="734.7" y="494.3" font-size="5.97" text-anchor="end" fill="#333">500</text><text x="989.4" y="494.3" font-size="5.97" fill="#333">500</text><text x="734.7" y="519.7" font-size="5.97" text-anchor="end" fill="#333">400</text><text x="989.4" y="519.7" font-size="5.97" fill="#333">400</text><text x="734.7" y="545.1" font-size="5.97" text-anchor="end" fill="#333">300</text><text x="989.4" y="545.1" font-size="5.97" fill="#333">300</text><text x="734.7" y="570.5" font-size="5.97" text-anchor="end" fill="#333">200</text><text x="989.4" y="570.5" font-size="5.97" fill="#333">200</text><text x="734.7" y="595.9" font-size="5.97" text-anchor="end" fill="#333">100</text><text x="989.4" y="595.9" font-size="5.97" fill="#333">100</text><text x="987" y="428.7" font-size="6.84" text-anchor="end" fill="#333">May 28, 1:43 PM - May 29, 1:43 PM  (1 day)</text><text x="987" y="437.5" font-size="6.84" text-anchor="end" fill="#333">All Sources, 1,407 events</text>
</svg></section>
</main>
</div></body></html>
